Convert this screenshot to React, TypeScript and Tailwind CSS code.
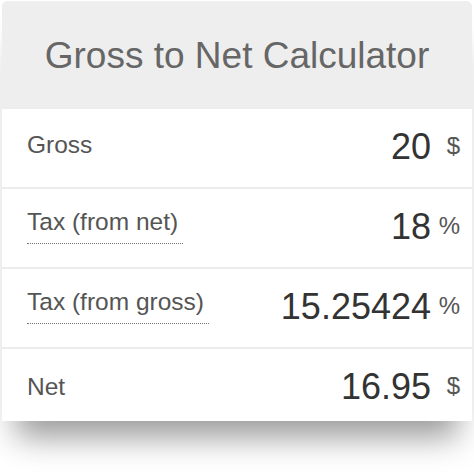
import * as React from "react"

type Row = {
	label: string
	value: string
	unit: string
	dotted?: boolean
}

const rows: Row[] = [
	{ label: "Gross", value: "20", unit: "$" },
	{ label: "Tax (from net)", value: "18", unit: "%", dotted: true },
	{ label: "Tax (from gross)", value: "15.25424", unit: "%", dotted: true },
	{ label: "Net", value: "16.95", unit: "$" },
]

function CalcRow({ row, last }: { row: Row; last: boolean }) {
	return (
		<div
			className={
				"mt-[2px] flex items-center bg-white pl-[25px] pr-[12px] " +
				(last ? "h-[72px] pt-[6px]" : "h-[78px]")
			}
		>
			<span
				className={
					"text-[24.5px] leading-none text-[#555] " +
					(row.dotted
						? "border-b border-dotted border-[#777] pb-[9px] pr-[5px] mb-[2px]"
						: last
							? "mb-[2px]"
							: "mb-[6px]")
				}
			>
				{row.label}
			</span>
			<span className="ml-auto mb-[2px] text-[36px] leading-none text-[#333]">{row.value}</span>
			<span className="mb-[4px] w-[29px] text-right text-[24px] leading-none font-light text-[#555]">{row.unit}</span>
		</div>
	)
}

export default function App() {
	return (
		<div className="h-[474px] w-[474px] overflow-hidden bg-white px-[2px] pt-[1px] font-['Liberation_Sans',Arial,sans-serif]">
			<div className="rounded-t-[6px] bg-[#ececec] shadow-[0_30px_30px_-14px_rgba(0,0,0,0.4)]">
				<div className="flex h-[106px] items-center justify-center rounded-t-[6px] bg-[#eeeeee] pt-[2px]">
					<h1 className="text-[37px] leading-none text-[#666]">Gross to Net Calculator</h1>
				</div>
				{rows.map((r, i) => (
					<CalcRow key={r.label} row={r} last={i === rows.length - 1} />
				))}
			</div>
		</div>
	)
}
